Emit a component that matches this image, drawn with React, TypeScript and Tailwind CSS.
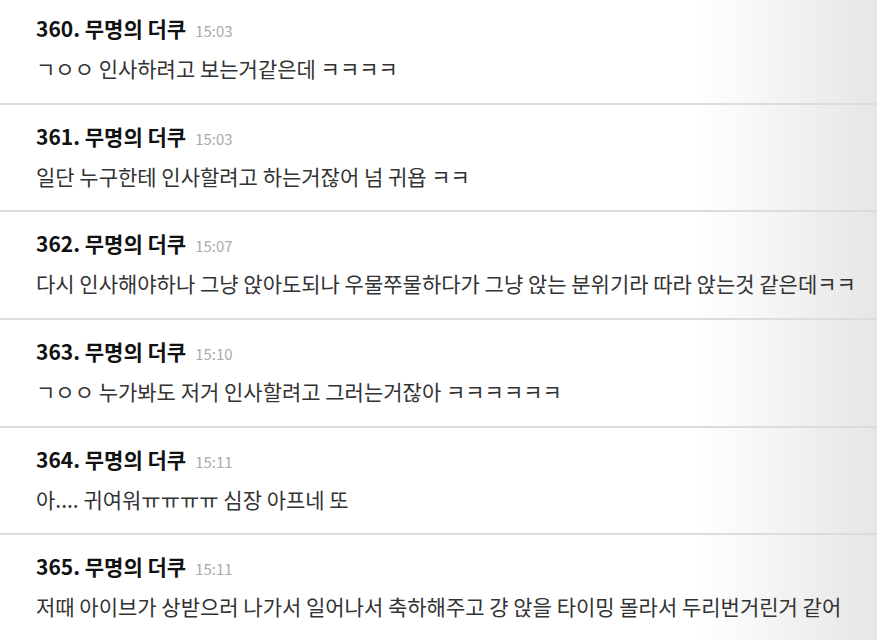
import React from "react";

const items = [
  { n: 360, t: "15:03", body: "ㄱㅇㅇ 인사하려고 보는거같은데 ㅋㅋㅋㅋ" },
  { n: 361, t: "15:03", body: "일단 누구한테 인사할려고 하는거잖어 넘 귀욥 ㅋㅋ" },
  { n: 362, t: "15:07", body: "다시 인사해야하나 그냥 앉아도되나 우물쭈물하다가 그냥 앉는 분위기라 따라 앉는것 같은데ㅋㅋ" },
  { n: 363, t: "15:10", body: "ㄱㅇㅇ 누가봐도 저거 인사할려고 그러는거잖아 ㅋㅋㅋㅋㅋㅋ" },
  { n: 364, t: "15:11", body: "아.... 귀여워ㅠㅠㅠㅠ 심장 아프네 또" },
  { n: 365, t: "15:11", body: "저때 아이브가 상받으러 나가서 일어나서 축하해주고 걍 앉을 타이밍 몰라서 두리번거린거 같어" },
];

export default function App() {
  return (
    <div
      className="relative w-[877px] h-[640px] overflow-hidden bg-white"
      style={{ fontFamily: '"Noto Sans CJK KR", "Noto Sans", sans-serif' }}
    >
      <div className="pointer-events-none absolute inset-y-0 right-0 w-[180px] bg-gradient-to-r from-white to-[#e6e6e6]" />
      <div className="relative -mt-[3px]">
        {items.map((it) => (
          <div key={it.n} className="h-[107.7px] border-b-2 border-[#dcdcdc] pl-[36px] pt-[19px]">
            <div className="flex items-baseline gap-[9px] leading-[24px]">
              <span className="text-[21px] font-bold text-[#111]">{it.n}. 무명의 더쿠</span>
              <span className="text-[15px] text-[#aaa]">{it.t}</span>
            </div>
            <div className="mt-[13px] text-[21px] leading-[24px] text-[#333] whitespace-nowrap">{it.body}</div>
          </div>
        ))}
      </div>
    </div>
  );
}
